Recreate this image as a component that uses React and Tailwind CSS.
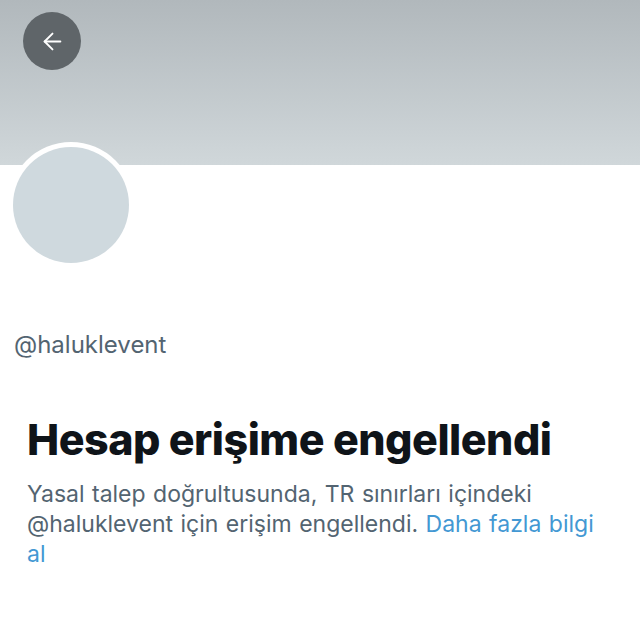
import React from 'react';
import { ArrowLeft } from 'lucide-react';

const App = () => {
  return (
    <div className="w-[640px] h-[630px] bg-white overflow-hidden font-['Inter',sans-serif]">
      {/* banner */}
      <div className="h-[165px] bg-gradient-to-b from-[#b1b8bc] to-[#d0d7da] px-[23px] pt-[12px]">
        <button className="w-[58px] h-[58px] rounded-full bg-[#5f6569] flex items-center justify-center">
          <ArrowLeft className="w-[27px] h-[27px] text-white" strokeWidth={1.7} />
        </button>
      </div>

      {/* avatar overlapping banner */}
      <div className="px-[8px] -mt-[23px]">
        <div className="w-[126px] h-[126px] rounded-full bg-white p-[5px]">
          <div className="w-full h-full rounded-full bg-[#cfd9de]" />
        </div>
      </div>

      <div className="px-[14px] mt-[62px]">
        <p className="text-[24px] leading-[30px] text-[#536471]">@haluklevent</p>
      </div>

      <div className="pl-[27px] pr-[38px] mt-[54px]">
        <h1 className="text-[43px] leading-[50px] font-extrabold text-[#0f1419] tracking-[-0.5px]">
          Hesap erişime engellendi
        </h1>
        <p className="mt-[15px] text-[23px] leading-[30px] text-[#536471] [word-spacing:1px]">
          Yasal talep doğrultusunda, TR sınırları içindeki
          <br />
          @haluklevent için erişim engellendi.{' '}
          <span className="text-[#4398d3]">Daha fazla bilgi al</span>
        </p>
      </div>
    </div>
  );
};

export default App;
